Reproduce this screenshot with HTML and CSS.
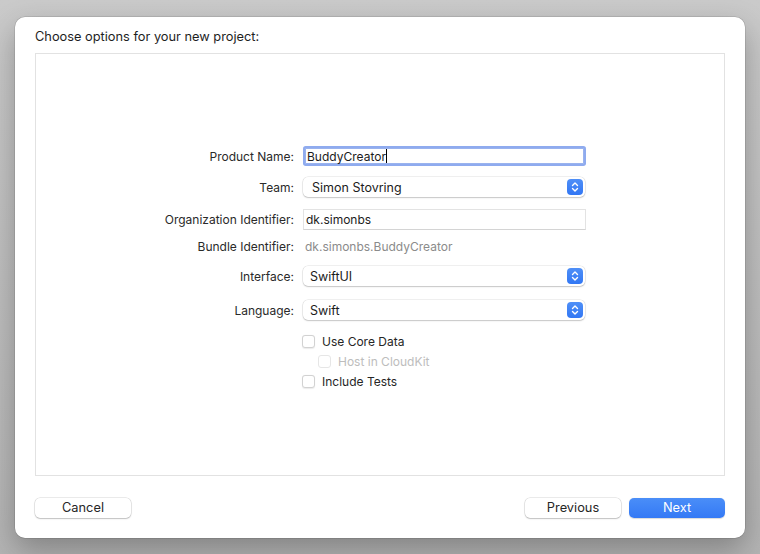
FILE: index.html
```html
<!DOCTYPE html>
<html>
<head>
<meta charset="utf-8">
<link rel="stylesheet" href="styles.css">
</head>
<body>
<div class="window">
  <div class="title">Choose options for your new project:</div>
  <div class="panel">
    <div class="form">
      <div class="row r1">
        <div class="label">Product Name:</div>
        <div class="field focus">BuddyCreator<span class="caret"></span></div>
      </div>
      <div class="row r2">
        <div class="label">Team:</div>
        <div class="popup"><span class="ptext">Simon Stovring</span><span class="stepper"><svg width="16" height="16" viewBox="0 0 16 16"><path d="M5.5 6.5 L8 4 L10.5 6.5 M5.5 9.5 L8 12 L10.5 9.5" fill="none" stroke="#fff" stroke-width="1.4" stroke-linecap="round" stroke-linejoin="round"/></svg></span></div>
      </div>
      <div class="row r3">
        <div class="label">Organization Identifier:</div>
        <div class="field">dk.simonbs</div>
      </div>
      <div class="row r4">
        <div class="label">Bundle Identifier:</div>
        <div class="static">dk.simonbs.BuddyCreator</div>
      </div>
      <div class="row r5">
        <div class="label">Interface:</div>
        <div class="popup"><span class="ptext p2">SwiftUI</span><span class="stepper"><svg width="16" height="16" viewBox="0 0 16 16"><path d="M5.5 6.5 L8 4 L10.5 6.5 M5.5 9.5 L8 12 L10.5 9.5" fill="none" stroke="#fff" stroke-width="1.4" stroke-linecap="round" stroke-linejoin="round"/></svg></span></div>
      </div>
      <div class="row r6">
        <div class="label">Language:</div>
        <div class="popup"><span class="ptext p2">Swift</span><span class="stepper"><svg width="16" height="16" viewBox="0 0 16 16"><path d="M5.5 6.5 L8 4 L10.5 6.5 M5.5 9.5 L8 12 L10.5 9.5" fill="none" stroke="#fff" stroke-width="1.4" stroke-linecap="round" stroke-linejoin="round"/></svg></span></div>
      </div>
      <div class="row r7">
        <div></div>
        <label class="check"><span class="box"></span>Use Core Data</label>
      </div>
      <div class="row r8">
        <div></div>
        <label class="check sub disabled"><span class="box"></span>Host in CloudKit</label>
      </div>
      <div class="row r9">
        <div></div>
        <label class="check"><span class="box"></span>Include Tests</label>
      </div>
    </div>
  </div>
  <div class="footer">
    <button class="btn">Cancel</button>
    <div class="right">
      <button class="btn">Previous</button>
      <button class="btn primary">Next</button>
    </div>
  </div>
</div>
</body>
</html>
```

FILE: styles.css
```css
html, body {
  margin: 0;
  padding: 0;
}
body {
  width: 760px;
  height: 554px;
  background: linear-gradient(#cacaca, #b4b4b4);
  font-family: Inter, "Noto Sans", "Liberation Sans", sans-serif;
  font-size: 13px;
  color: #262626;
  overflow: hidden;
  padding: 17px 15px 0;
  box-sizing: border-box;
}
.window {
  width: 730px;
  height: 521px;
  background: #fff;
  border-radius: 10px;
  box-shadow: 0 0 0 0.5px rgba(0,0,0,0.18), 0 12px 30px rgba(0,0,0,0.28);
  padding: 0 20px;
  box-sizing: border-box;
  display: flex;
  flex-direction: column;
}
.title {
  height: 36px;
  line-height: 40px;
  color: #1e1e1e;
  font-size: 12.8px;
}
.panel {
  height: 423px;
  border: 1px solid #e2e2e2;
  box-sizing: border-box;
}
.form {
  display: flex;
  flex-direction: column;
  padding-top: 91px;
  font-size: 12px;
}
.row {
  display: grid;
  grid-template-columns: 258px 285px;
  column-gap: 8px;
  align-items: center;
  height: 22px;
}
.r2 { margin-top: 9px; }
.r3 { margin-top: 10px; height: 23px; }
.r4 { margin-top: 7px; height: 16px; }
.r5 { margin-top: 11px; }
.r6 { margin-top: 12px; }
.r7 { margin-top: 12px; height: 16px; }
.r8 { margin-top: 4px; height: 16px; }
.r9 { margin-top: 4px; height: 16px; }
.label {
  text-align: right;
  color: #2a2a2a;
  white-space: nowrap;
}
.field {
  height: 21px;
  width: 283px;
  box-sizing: border-box;
  margin-left: 1px;
  border: 1px solid #e3e3e3;
  border-bottom-color: #d4d4d4;
  padding-left: 2px;
  line-height: 19px;
  color: #1c1c1c;
  background: #fff;
}
.field.focus {
  width: 279px;
  height: 16px;
  margin-left: 3px;
  border: 1px solid #9ab3ee;
  box-shadow: 0 0 0 2px #8fabef;
  line-height: 15px;
  padding-left: 1px;
  border-radius: 1px;
}
.caret {
  display: inline-block;
  width: 1px;
  height: 14px;
  background: #000;
  vertical-align: -2px;
}
.static {
  color: #8b8b8b;
  padding-left: 3px;
}
.popup {
  height: 20px;
  width: 282px;
  margin-left: 1px;
  box-sizing: border-box;
  border-radius: 5px;
  background: #fff;
  box-shadow: 0 0 0 0.5px rgba(0,0,0,0.12), 0 1px 1.5px rgba(0,0,0,0.18);
  display: flex;
  align-items: center;
  justify-content: space-between;
  padding: 0 2px 0 9px;
  color: #1c1c1c;
}
.ptext { font-size: 12.5px; }
.ptext.p2 { margin-left: -2px; }
.stepper {
  width: 16px;
  height: 16px;
  border-radius: 4px;
  background: linear-gradient(#4f8ff7, #3277f4);
  display: flex;
}
.check {
  display: flex;
  align-items: center;
  gap: 7px;
  color: #262626;
  white-space: nowrap;
}
.check.sub { margin-left: 16px; }
.box {
  width: 13px;
  height: 13px;
  border-radius: 3px;
  background: #fff;
  box-sizing: border-box;
  border: 1px solid #d2d2d2;
  box-shadow: 0 0.5px 1px rgba(0,0,0,0.08);
}
.disabled { color: #bdbdbd; }
.disabled .box { border-color: #e6e6e6; box-shadow: none; }
.footer {
  display: flex;
  justify-content: space-between;
  margin-top: 22px;
}
.right {
  display: flex;
  gap: 8px;
}
.btn {
  width: 96px;
  height: 20px;
  border: none;
  border-radius: 5px;
  background: #fff;
  box-shadow: 0 0 0 0.5px rgba(0,0,0,0.16), 0 1px 1.5px rgba(0,0,0,0.18);
  font-family: Inter, "Noto Sans", "Liberation Sans", sans-serif;
  font-size: 12.8px;
  color: #262626;
  padding: 0;
  line-height: 20px;
}
.btn.primary {
  background: linear-gradient(#4a8ef8, #3479f5);
  color: #fff;
  box-shadow: 0 0.5px 1px rgba(0,0,0,0.15);
}
```
